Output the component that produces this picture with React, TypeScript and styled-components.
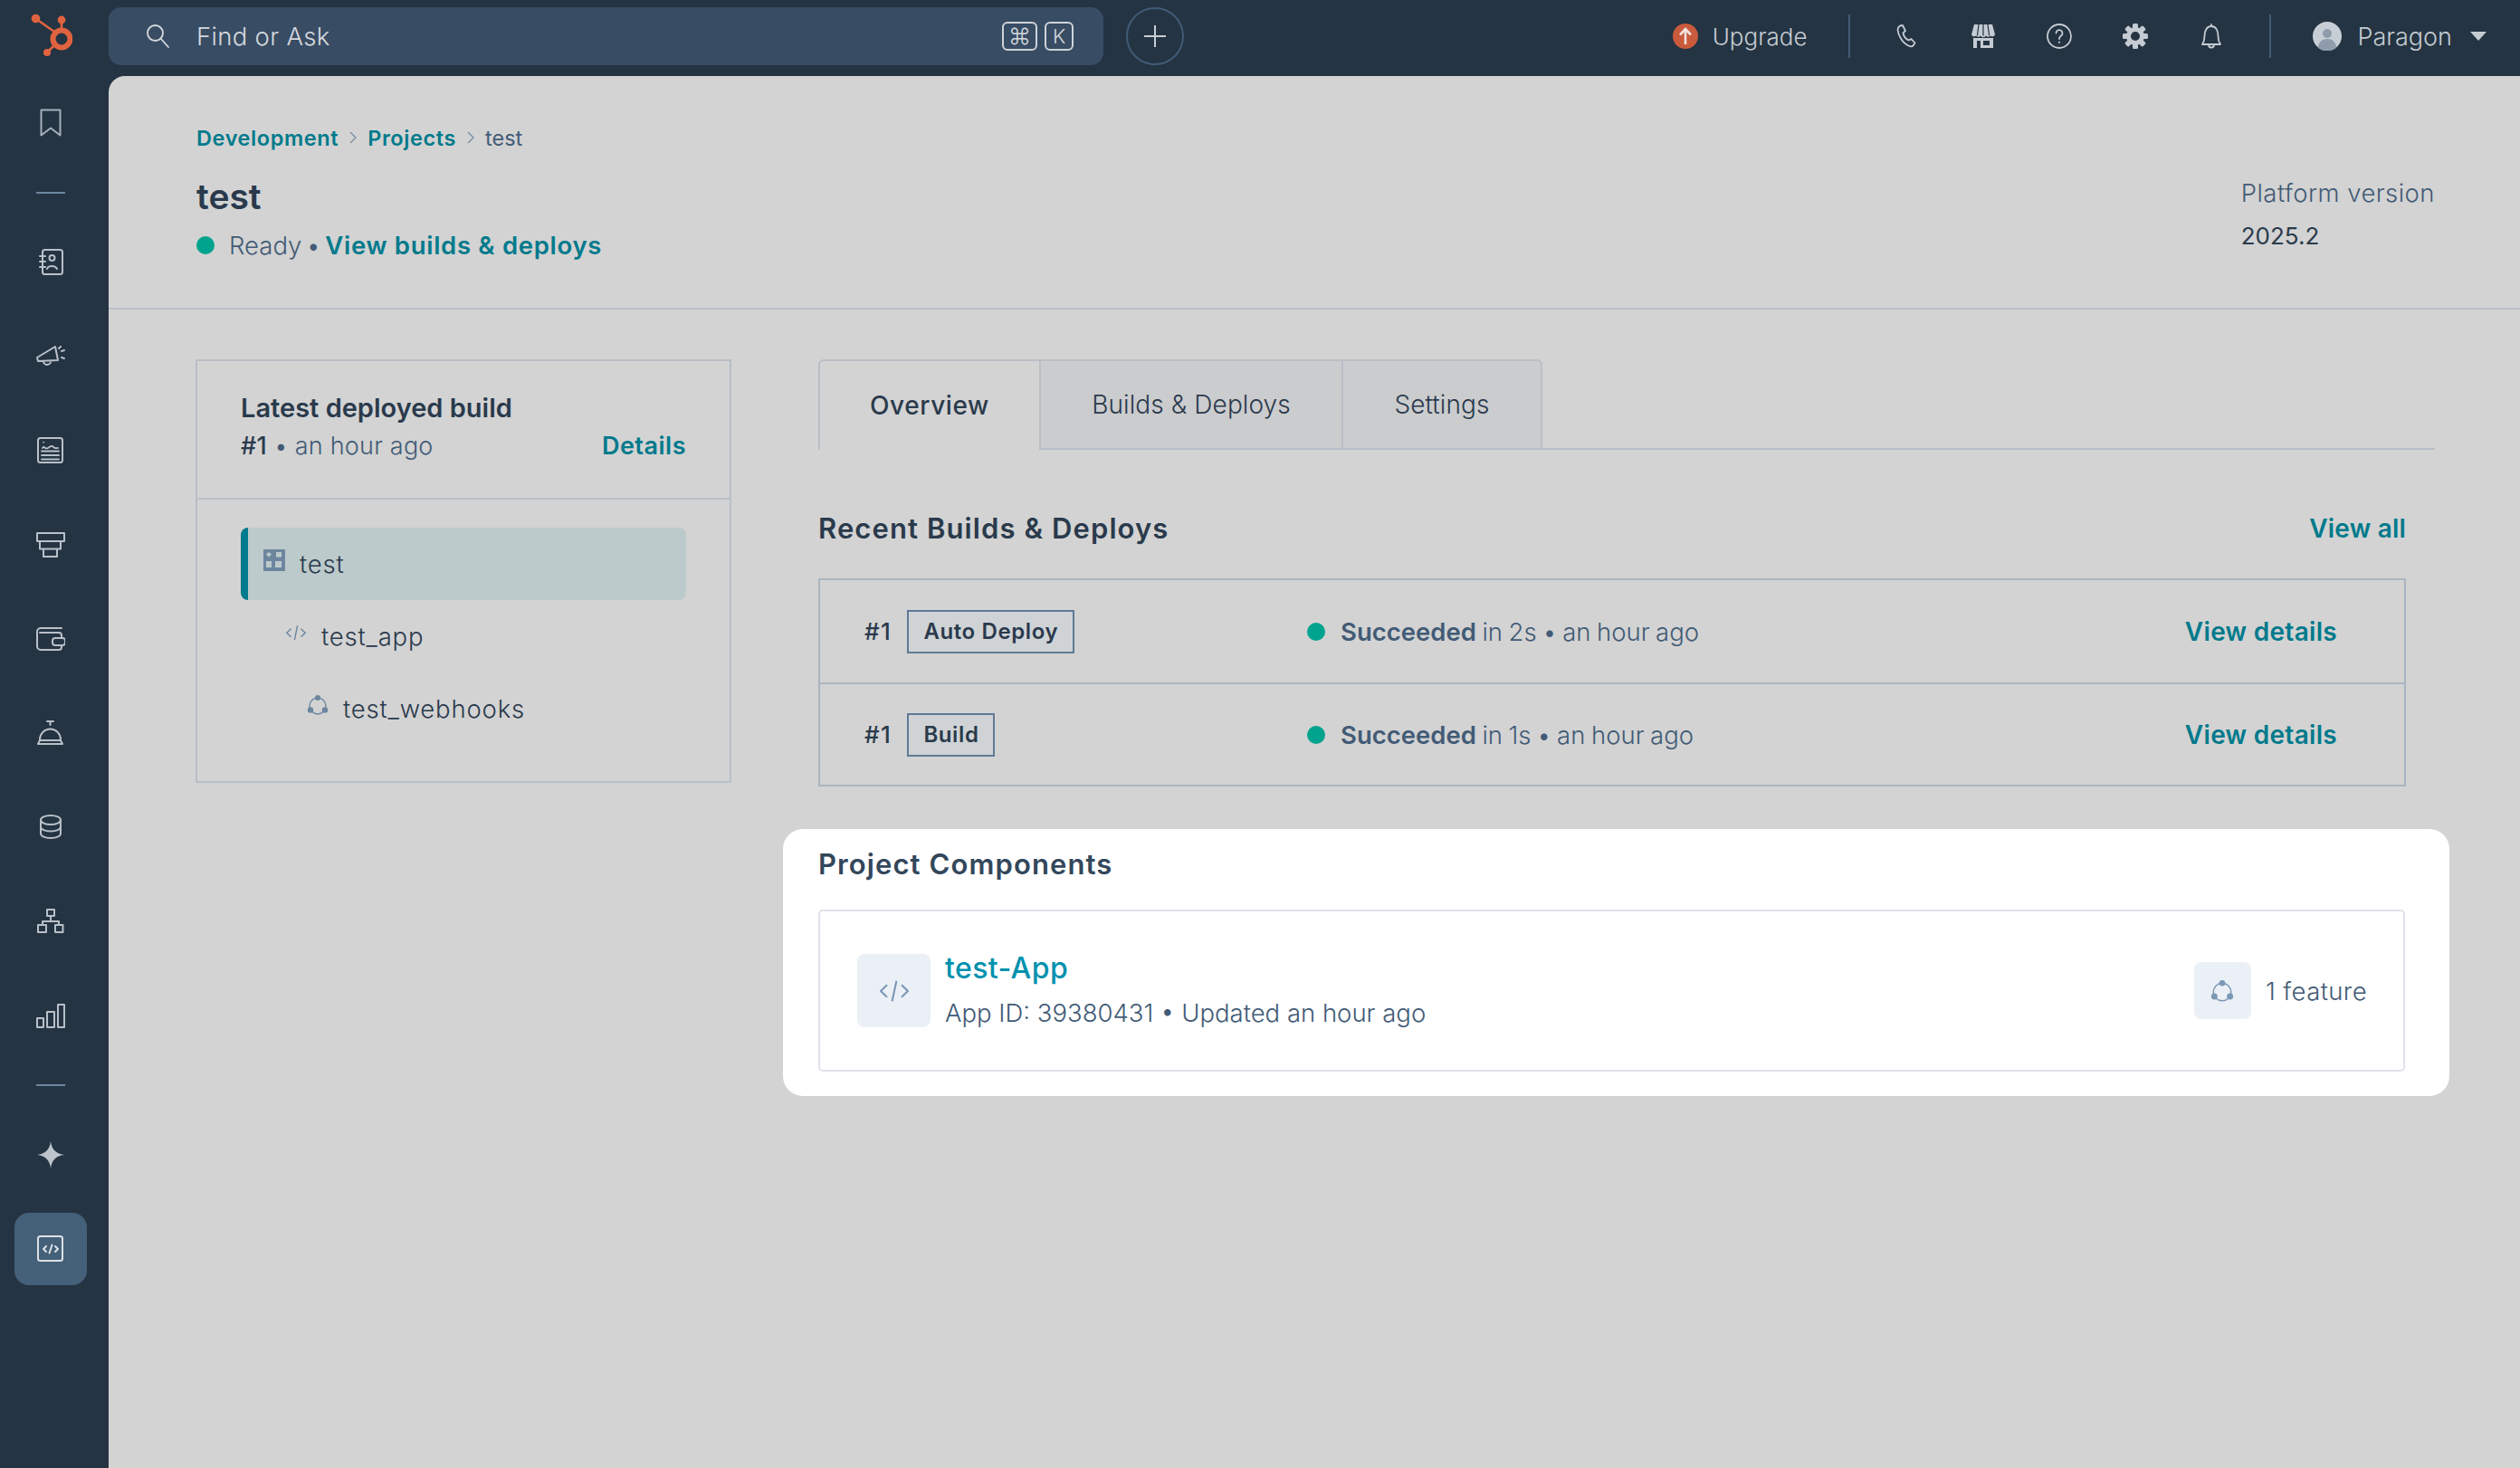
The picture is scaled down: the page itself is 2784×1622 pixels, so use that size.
import React from 'react'
import styled, { createGlobalStyle } from 'styled-components'

const FONT = `Inter, "DejaVu Sans", sans-serif`
const TEAL = '#007a8c'
const DARK = '#2a3a4c'
const SLATE = '#425b76'
const LINE = '#b9bfc6'

const GlobalStyle = createGlobalStyle`
    html, body, #root {
        height: 100%;
        margin: 0;
    }
    body {
        background: #243443;
        font-family: ${FONT};
        overflow: hidden;
    }
    * {
        box-sizing: border-box;
    }
`

const Page = styled.div`
    display: grid;
    grid-template-columns: 120px 1fr;
    grid-template-rows: 84px 1fr;
    height: 100%;
    background: #243443;
`

const TopBar = styled.header`
    grid-column: 1 / 3;
    height: 84px;
    padding-bottom: 4px;
    display: flex;
    align-items: center;
`

const LogoCell = styled.div`
    align-self: flex-start;
    width: 120px;
    height: 84px;
    padding: 12px 0 0 32px;
    flex-shrink: 0;
`

const SearchBox = styled.div`
    width: 1099px;
    height: 64px;
    display: flex;
    align-items: center;
    padding: 0 33px 0 40px;
    background: #384c64;
    border-radius: 14px;
    color: #d5d9de;
`

const SearchText = styled.span`
    margin-left: 29px;
    font-size: 27.5px;
    font-weight: 300;
    letter-spacing: 0.3px;
    flex: 1;
`

const Key = styled.span<{ $wide?: boolean }>`
    min-width: ${(p) => (p.$wide ? 39 : 32)}px;
    height: 32px;
    margin-left: 8px;
    display: flex;
    align-items: center;
    justify-content: center;
    border: 2px solid #ced3d9;
    border-radius: 6px;
    font-size: ${(p) => (p.$wide ? 25 : 22)}px;
    font-weight: 300;
    color: #d5d9de;
`

const PlusButton = styled.div`
    width: 64px;
    height: 64px;
    margin-left: 25px;
    display: flex;
    align-items: center;
    justify-content: center;
    border: 2px solid #425b76;
    border-radius: 50%;
    color: #c8ced5;
`

const TopRight = styled.div`
    margin-left: auto;
    display: flex;
    align-items: center;
    padding-right: 37px;
    color: #c5cbd2;
`

const UpgradeText = styled.span`
    margin-left: 16px;
    font-size: 26px;
    font-weight: 300;
`

const TopDivider = styled.div<{ $left: number; $right: number }>`
    width: 2px;
    height: 48px;
    margin: 0 ${(p) => p.$right}px 0 ${(p) => p.$left}px;
    background: #425b76;
`

const TopIconRow = styled.div`
    display: flex;
    gap: 56px;
`

const TopIcon = styled.svg`
    width: 28px;
    height: 28px;
    display: block;
    fill: none;
    stroke: currentColor;
    stroke-width: 1.8;
    stroke-linecap: round;
    stroke-linejoin: round;
`

const UserName = styled.span`
    margin-left: 18px;
    font-size: 27px;
    font-weight: 300;
`

const Caret = styled.span`
    margin-left: 20px;
    width: 0;
    height: 0;
    border-left: 9px solid transparent;
    border-right: 9px solid transparent;
    border-top: 10px solid #c5cbd2;
`

const SideBar = styled.nav`
    display: flex;
    flex-direction: column;
    align-items: center;
    padding-right: 8px;
    color: #b9c0c8;
`

const SideItem = styled.div<{ $active?: boolean }>`
    width: 80px;
    height: 80px;
    margin: 12px 0;
    display: flex;
    align-items: center;
    justify-content: center;
    border-radius: 16px;
    background: ${(p) => (p.$active ? '#456079' : 'transparent')};
    color: ${(p) => (p.$active ? '#dde1e6' : 'inherit')};
`

const SideRule = styled.div`
    width: 32px;
    height: 2px;
    margin: 24px 0;
    background: #6d86a0;
`

const SideSvg = styled.svg`
    width: 32px;
    height: 32px;
    fill: none;
    stroke: currentColor;
    stroke-width: 2;
    stroke-linejoin: round;
    stroke-linecap: round;
`

const Content = styled.main`
    background: #d3d3d3;
    border-top-left-radius: 18px;
    overflow: hidden;
`

const PageHead = styled.section`
    height: 258px;
    display: flex;
    justify-content: space-between;
    padding: 52px 94px 0 97px;
    border-bottom: 2px solid ${LINE};
`

const Crumbs = styled.div`
    display: flex;
    align-items: center;
    height: 32px;
    font-size: 23.5px;
    color: ${SLATE};
`

const CrumbLink = styled.span`
    font-weight: 600;
    letter-spacing: 0.6px;
    color: ${TEAL};
`

const CrumbArrow = styled.svg`
    width: 10px;
    height: 16px;
    margin: 0 11px;
    fill: none;
    stroke: #7c8ea3;
    stroke-width: 1.4;
`

const Title = styled.h1`
    margin: 24px 0 11px;
    font-size: 39px;
    line-height: 50px;
    font-weight: 600;
    color: ${DARK};
`

const StatusLine = styled.div`
    display: flex;
    align-items: center;
    height: 36px;
    font-size: 27.5px;
    font-weight: 300;
    color: ${SLATE};
`

const Dot = styled.span`
    width: 20px;
    height: 20px;
    border-radius: 50%;
    background: #00a38d;
    flex-shrink: 0;
`

const ReadyText = styled.span`
    margin-left: 16px;
    word-spacing: -2.5px;
`

const StatusLink = styled.span`
    font-weight: 600;
    letter-spacing: 0.7px;
    color: ${TEAL};
`

const Version = styled.div`
    padding-top: 57px;
    font-size: 27.5px;
    line-height: 40px;
    font-weight: 300;
    letter-spacing: 0.45px;
    color: ${SLATE};
`

const VersionValue = styled.div`
    margin-top: 8px;
    font-size: 26px;
    letter-spacing: 0;
    font-weight: 400;
    color: ${DARK};
`

const Body = styled.section`
    display: flex;
    align-items: flex-start;
    padding: 55px 94px 0 96px;
`

const BuildCard = styled.aside`
    width: 592px;
    flex-shrink: 0;
    border: 2px solid ${LINE};
`

const BuildHead = styled.div`
    padding: 32px 48px 37px;
    border-bottom: 2px solid ${LINE};
`

const BuildTitle = styled.div`
    font-size: 29px;
    line-height: 40px;
    font-weight: 600;
    color: ${DARK};
`

const BuildMeta = styled.div`
    margin-top: 2px;
    display: flex;
    justify-content: space-between;
    font-size: 27px;
    line-height: 40px;
    font-weight: 300;
    letter-spacing: 0.2px;
    color: ${SLATE};
`

const BuildNo = styled.b`
    font-weight: 500;
    color: ${DARK};
`

const DetailsLink = styled.span`
    font-weight: 600;
    letter-spacing: 0.5px;
    color: ${TEAL};
`

const Tree = styled.div`
    padding: 31px 48px 40px;
`

const TreeRow = styled.div<{ $depth: number; $active?: boolean }>`
    height: 80px;
    display: flex;
    align-items: center;
    gap: 18px;
    padding-left: ${(p) => 25 + p.$depth * 24}px;
    border-radius: 8px;
    font-size: 27.5px;
    font-weight: 300;
    letter-spacing: 0.8px;
    color: ${DARK};
    background: ${(p) => (p.$active ? '#bccacb' : 'transparent')};
    border-left: 8px solid ${(p) => (p.$active ? TEAL : 'transparent')};
`

const TreeIcon = styled.svg`
    width: 24px;
    height: 24px;
    margin: 0 -2px 8px -8px;
    display: flex;
    align-items: center;
    justify-content: center;
    color: #6d86a0;
    flex-shrink: 0;
`

const Main = styled.div`
    flex: 1;
    margin-left: 96px;
`

const TabBar = styled.div`
    display: flex;
    height: 100px;
    border-bottom: 2px solid ${LINE};
`

const Tab = styled.div<{ $active?: boolean; $width: number }>`
    width: ${(p) => p.$width}px;
    height: 100px;
    display: flex;
    align-items: center;
    justify-content: center;
    margin-left: -2px;
    border: 2px solid ${LINE};
    border-bottom: ${(p) => (p.$active ? 'none' : `2px solid ${LINE}`)};
    font-size: 28px;
    font-weight: ${(p) => (p.$active ? 500 : 300)};
    letter-spacing: ${(p) => (p.$active ? 0.6 : 0.1)}px;
    color: ${DARK};
    background: ${(p) => (p.$active ? '#d3d3d3' : '#cbccce')};
    &:first-child {
        margin-left: 0;
        border-top-left-radius: 6px;
    }
    &:last-child {
        border-top-right-radius: 6px;
    }
`

const SectionHead = styled.div`
    height: 142px;
    margin-right: 32px;
    padding-top: 32px;
    display: flex;
    align-items: center;
    justify-content: space-between;
`

const SectionTitle = styled.h2`
    margin: 0;
    font-size: 31px;
    line-height: 40px;
    font-weight: 600;
    letter-spacing: 1.1px;
    color: ${DARK};
`

const ViewAll = styled.span`
    font-size: 28px;
    font-weight: 600;
    letter-spacing: 0.2px;
    color: ${TEAL};
`

const BuildTable = styled.div`
    margin-right: 32px;
    border: 2px solid #a9b5c1;
`

const BuildRow = styled.div`
    height: 113px;
    display: grid;
    grid-template-columns: 489px 1fr auto;
    align-items: center;
    padding: 0 74px 0 49px;
    & + & {
        border-top: 2px solid #a9b5c1;
    }
`

const RunCell = styled.div`
    display: flex;
    align-items: center;
    gap: 17px;
    font-size: 26px;
    font-weight: 500;
    letter-spacing: 1.5px;
    color: ${DARK};
`

const RunTag = styled.span`
    height: 48px;
    display: flex;
    align-items: center;
    padding: 0 16px;
    border: 2px solid #5e7a96;
    font-size: 24px;
    font-weight: 600;
    letter-spacing: 0.6px;
    color: ${DARK};
    background: #d0d3d6;
`

const RunStatus = styled.div`
    display: flex;
    align-items: center;
    gap: 17px;
    font-size: 27.5px;
    font-weight: 300;
    word-spacing: -1.2px;
    color: ${SLATE};
`

const RunStrong = styled.b`
    font-weight: 600;
`

const DetailLink = styled.span`
    font-size: 28px;
    font-weight: 600;
    letter-spacing: 0.3px;
    color: ${TEAL};
`

const Panel = styled.div`
    margin: 47px -16px 0 -39px;
    padding: 19px 49px 27px 39px;
    background: #fff;
    border-radius: 22px;
`

const PanelTitle = styled(SectionTitle)`
    color: #33475b;
    margin-bottom: 30px;
`

const ComponentCard = styled.div`
    height: 179px;
    display: flex;
    align-items: center;
    padding: 0 40px 0 41px;
    border: 2px solid #dfe3eb;
    border-radius: 5px;
`

const Tile = styled.div<{ $size: number }>`
    width: ${(p) => p.$size}px;
    height: ${(p) => p.$size}px;
    display: flex;
    align-items: center;
    justify-content: center;
    flex-shrink: 0;
    background: #eaf0f6;
    border-radius: 8px;
    color: #7c98b6;
`

const ComponentText = styled.div`
    margin-left: 16px;
    flex: 1;
`

const ComponentName = styled.div`
    font-size: 32px;
    line-height: 40px;
    font-weight: 500;
    letter-spacing: 0.4px;
    color: #0091ae;
`

const ComponentMeta = styled.div`
    margin-top: 9px;
    font-size: 27.5px;
    line-height: 40px;
    font-weight: 300;
    color: ${SLATE};
`

const FeatureText = styled.span`
    margin-left: 16px;
    font-size: 27.5px;
    font-weight: 300;
    letter-spacing: 0.4px;
    color: ${SLATE};
`

function Logo() {
    return (
        <svg width="48" height="52" viewBox="32 12 48 52" fill="#e0633f" stroke="#e0633f">
            <circle cx="68" cy="43" r="9.5" fill="none" strokeWidth="6" />
            <circle cx="68" cy="22" r="4.4" stroke="none" />
            <circle cx="39.5" cy="20.5" r="4.8" stroke="none" />
            <circle cx="52" cy="58" r="4" stroke="none" />
            <path d="M68 24v12M40 21l20 14M53 57l8-8" strokeWidth="2.6" fill="none" />
        </svg>
    )
}

function CodeIcon({ width }: { width: number }) {
    return (
        <svg width={width} height={(width * 3) / 4} viewBox="0 0 24 18" fill="none" stroke="currentColor" strokeWidth="1.6">
            <path d="M6 4 .8 9 6 14M18 4l5.200 5-5.200 5M13.800.5l-3.600 17" />
        </svg>
    )
}

function FeatureIcon({ size }: { size: number }) {
    return (
        <svg width={size} height={size} viewBox="0 0 24 24" fill="none" stroke="currentColor" strokeWidth="1.4">
            <circle cx="12" cy="13" r="9" />
            <g fill="currentColor" stroke="none">
                <circle cx="12" cy="4" r="3" />
                <circle cx="4" cy="17.5" r="3.2" />
                <circle cx="20" cy="17.5" r="3.2" />
            </g>
        </svg>
    )
}

const sideIcons: Record<string, React.ReactNode> = {
    bookmark: <path d="M5.5 1.5h21v28l-10.5-8-10.5 8z" stroke="#a5b0bb" />,
    contacts: (
        <>
            <rect x="7" y="2" width="22" height="27" rx="2.5" />
            <path d="M4 9h6M4 15h6M4 21h6M12 23c1.5-4 9-4 11 0" />
            <circle cx="17.5" cy="11" r="3" />
        </>
    ),
    marketing: <path d="M1 17 21 5l3 15-22 1zM8 21a4 4 0 0 0 8 0M25 7l2-2M28 10l3-1M28 17l3 1" />,
    reports: (
        <>
            <rect x="2" y="2" width="27" height="27" rx="2.5" />
            <path d="M7 13c2-3 3 2 6 0s4-3 6-1 3 1 5 1M6 16.5h19M6 21h19M6 25.5h19M8 6.6h.1" strokeWidth="1.8" />
        </>
    ),
    commerce: <path d="M1 3h30v9H1zM4 12h23v8.500H4zM8 20.500h15V29H8z" />,
    wallet: (
        <>
            <path d="M28 15v-3a3 3 0 0 0-3-3H4M28 4H5a4 4 0 0 0-4 4v16a4 4 0 0 0 4 4h20a3 3 0 0 0 3-3v-2" />
            <rect x="18" y="15" width="14" height="8" rx="3" />
        </>
    ),
    service: <path d="M12 3h7M15.500 3v4M4 23a11.500 11.500 0 0 1 23 0M2 28h27l-2-4H4z" />,
    data: (
        <>
            <ellipse cx="16" cy="8" rx="11" ry="5" />
            <path d="M5 8v15c0 3 5 5 11 5s11-2 11-5V8M5 15.500c0 3 5 5 11 5s11-2 11-5" />
        </>
    ),
    org: (
        <>
            <rect x="12" y="3" width="8" height="7" />
            <rect x="2" y="20" width="9" height="8" />
            <rect x="21" y="20" width="8.500" height="8" />
            <path d="M16 10v6M7 20v-4h18v4" />
        </>
    ),
    chart: <path d="M1 19h7v10H1zM12 12h8v17h-8zM24 4h7v25h-7z" />,
    spark: <path d="M16 1c1 9 6 14 15 15-9 1-14 6-15 15-1-9-6-14-15-15 9-1 14-6 15-15z" fill="#bcc4cc" stroke="none" />,
    code: (
        <>
            <rect x="2" y="2" width="27" height="27" rx="2.500" />
            <path d="M11 13l-3 3 3 3M21 13l3 3-3 3M17.500 11.500l-3 9" />
        </>
    ),
}

function SideIcon({ name }: { name: string }) {
    return <SideSvg viewBox="0 0 32 32">{sideIcons[name]}</SideSvg>
}

const runs = [
    { tag: 'Auto Deploy', time: '2s' },
    { tag: 'Build', time: '1s' },
]

function App() {
    return (
        <Page>
            <GlobalStyle />
            <TopBar>
                <LogoCell>
                    <Logo />
                </LogoCell>
                <SearchBox>
                    <TopIcon viewBox="0 0 28 28" strokeWidth="2">
                        <circle cx="11.500" cy="10.500" r="8.500" />
                        <path d="M18 17l8 9" />
                    </TopIcon>
                    <SearchText>Find or Ask</SearchText>
                    <Key $wide>⌘</Key>
                    <Key>K</Key>
                </SearchBox>
                <PlusButton>
                    <svg width="26" height="26" viewBox="0 0 26 26" stroke="currentColor" strokeWidth="2">
                        <path d="M13 1v24M1 13h24" />
                    </svg>
                </PlusButton>
                <TopRight>
                    <svg width="28" height="28" viewBox="0 0 28 28">
                        <circle cx="14" cy="14" r="14" fill="#c95b3c" />
                        <path d="M14 23V7M8 12.500 14 6l6 6.500" fill="none" stroke="#f1e2dc" strokeWidth="2.600" />
                    </svg>
                    <UpgradeText>Upgrade</UpgradeText>
                    <TopDivider $left={45} $right={49} />
                    <TopIconRow>
                        <TopIcon viewBox="0 0 28 28">
                            <path d="M6 2.500l3-.5 3 6-2.500 2.500c.5 3 3 6.500 6 8l3-1.500 4 4.500-2 3c-1 1-3 1-5 0C9 22 4 13 3.500 7c0-2 1-3.500 2.500-4.500z" />
                        </TopIcon>
                        <TopIcon viewBox="0 0 28 28">
                            <g fill="currentColor" stroke="none">
                                <path d="M4 1h20l3 11a3 3 0 0 1-5 1.500 3.500 3.500 0 0 1-5 0 3.500 3.500 0 0 1-6 0 3.500 3.500 0 0 1-5 0A3 3 0 0 1 1 12z" />
                                <path fillRule="evenodd" d="M3 16h22v11H3zM7 19v8h4v-8zM14 19v5h7v-5z" />
                            </g>
                            <path d="M9 1l-1.500 12M14 1v12M19 1l1.500 12" stroke="#243443" strokeWidth="1.200" />
                        </TopIcon>
                        <TopIcon viewBox="0 0 28 28">
                            <circle cx="14" cy="14" r="13" />
                            <path d="M10.500 10.500a3.500 3.500 0 1 1 5.500 3c-1.500 1-2 2-2 3.500M14 20.500v.5" />
                        </TopIcon>
                        <TopIcon viewBox="0 0 28 28">
                            <g fill="currentColor" stroke="none">
                                {[0, 45, 90, 135, 180, 225, 270, 315].map((a) => (
                                    <rect key={a} x="11" y="0" width="6" height="7" rx="1.500" transform={`rotate(${a} 14 14)`} />
                                ))}
                            </g>
                            <circle cx="14" cy="14" r="7.500" strokeWidth="5" />
                        </TopIcon>
                        <TopIcon viewBox="0 0 28 28">
                            <path d="M4 23c2-3 2.500-5 2.500-9 0-7 3-11 7.500-11s7.500 4 7.500 11c0 4 .5 6 2.500 9zM11 23.500a3 3 0 0 0 6 0M14 3V1" />
                        </TopIcon>
                    </TopIconRow>
                    <TopDivider $left={50} $right={46} />
                    <svg width="32" height="32" viewBox="0 0 32 32">
                        <circle cx="16" cy="16" r="16" fill="#c7ced6" />
                        <circle cx="16" cy="13" r="5" fill="#8e9cac" />
                        <path d="M6 29c0-7 5-10 10-10s10 3 10 10a16 16 0 0 1-20 0z" fill="#8e9cac" />
                    </svg>
                    <UserName>Paragon</UserName>
                    <Caret />
                </TopRight>
            </TopBar>

            <SideBar>
                <SideItem><SideIcon name="bookmark" /></SideItem>
                <SideRule />
                <SideItem><SideIcon name="contacts" /></SideItem>
                <SideItem><SideIcon name="marketing" /></SideItem>
                <SideItem><SideIcon name="reports" /></SideItem>
                <SideItem><SideIcon name="commerce" /></SideItem>
                <SideItem><SideIcon name="wallet" /></SideItem>
                <SideItem><SideIcon name="service" /></SideItem>
                <SideItem><SideIcon name="data" /></SideItem>
                <SideItem><SideIcon name="org" /></SideItem>
                <SideItem><SideIcon name="chart" /></SideItem>
                <SideRule />
                <SideItem><SideIcon name="spark" /></SideItem>
                <SideItem $active><SideIcon name="code" /></SideItem>
            </SideBar>

            <Content>
                <PageHead>
                    <div>
                        <Crumbs>
                            <CrumbLink>Development</CrumbLink>
                            <CrumbArrow viewBox="0 0 10 16"><path d="M2 2l6 6-6 6" /></CrumbArrow>
                            <CrumbLink>Projects</CrumbLink>
                            <CrumbArrow viewBox="0 0 10 16"><path d="M2 2l6 6-6 6" /></CrumbArrow>
                            test
                        </Crumbs>
                        <Title>test</Title>
                        <StatusLine>
                            <Dot />
                            <ReadyText>Ready •&nbsp;</ReadyText>
                            <StatusLink>View builds &amp; deploys</StatusLink>
                        </StatusLine>
                    </div>
                    <Version>
                        Platform version
                        <VersionValue>2025.2</VersionValue>
                    </Version>
                </PageHead>

                <Body>
                    <BuildCard>
                        <BuildHead>
                            <BuildTitle>Latest deployed build</BuildTitle>
                            <BuildMeta>
                                <span><BuildNo>#1</BuildNo> • an hour ago</span>
                                <DetailsLink>Details</DetailsLink>
                            </BuildMeta>
                        </BuildHead>
                        <Tree>
                            <TreeRow $depth={0} $active>
                                <TreeIcon viewBox="0 0 24 24">
                                    <path fill="currentColor" fillRule="evenodd" d="M0 0h24v24H0zM3 5.500 6 3l3 2.500L6 8.500zM14 3h6v5.500h-6zM3 13h6v7H3zM13 13h7v7h-7z" />
                                </TreeIcon>
                                test
                            </TreeRow>
                            <TreeRow $depth={1}>
                                <TreeIcon as="span"><CodeIcon width={22} /></TreeIcon>
                                test_app
                            </TreeRow>
                            <TreeRow $depth={2}>
                                <TreeIcon as="span"><FeatureIcon size={24} /></TreeIcon>
                                test_webhooks
                            </TreeRow>
                        </Tree>
                    </BuildCard>

                    <Main>
                        <TabBar>
                            <Tab $active $width={246}>Overview</Tab>
                            <Tab $width={336}>Builds &amp; Deploys</Tab>
                            <Tab $width={222}>Settings</Tab>
                        </TabBar>

                        <SectionHead>
                            <SectionTitle>Recent Builds &amp; Deploys</SectionTitle>
                            <ViewAll>View all</ViewAll>
                        </SectionHead>

                        <BuildTable>
                            {runs.map((run) => (
                                <BuildRow key={run.tag}>
                                    <RunCell>
                                        #1
                                        <RunTag>{run.tag}</RunTag>
                                    </RunCell>
                                    <RunStatus>
                                        <Dot />
                                        <span><RunStrong>Succeeded</RunStrong> in {run.time} • an hour ago</span>
                                    </RunStatus>
                                    <DetailLink>View details</DetailLink>
                                </BuildRow>
                            ))}
                        </BuildTable>

                        <Panel>
                            <PanelTitle>Project Components</PanelTitle>
                            <ComponentCard>
                                <Tile $size={81}><CodeIcon width={32} /></Tile>
                                <ComponentText>
                                    <ComponentName>test-App</ComponentName>
                                    <ComponentMeta>App ID: 39380431 • Updated an hour ago</ComponentMeta>
                                </ComponentText>
                                <Tile $size={63}><FeatureIcon size={26} /></Tile>
                                <FeatureText>1 feature</FeatureText>
                            </ComponentCard>
                        </Panel>
                    </Main>
                </Body>
            </Content>
        </Page>
    )
}

export default App
